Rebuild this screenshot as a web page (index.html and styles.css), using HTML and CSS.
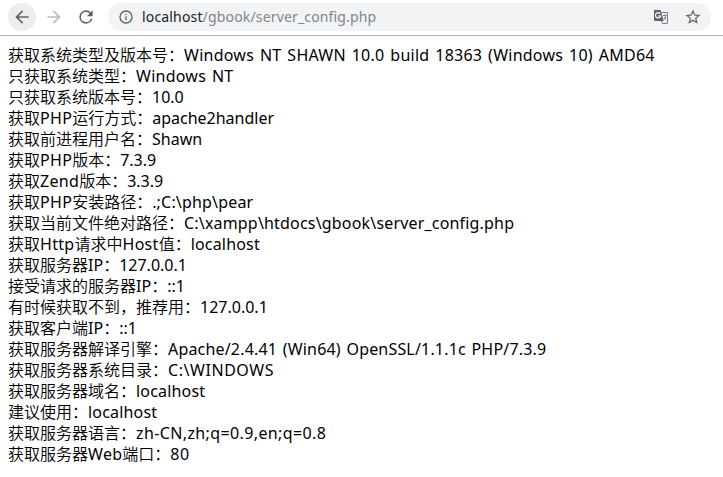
FILE: index.html
```html
<!DOCTYPE html>
<html lang="zh-CN">
<head>
<meta charset="utf-8">
<title>localhost/gbook/server_config.php</title>
<link rel="stylesheet" href="styles.css">
</head>
<body>
<header class="toolbar">
  <button class="nav back" aria-label="Back"><svg width="20" height="20" viewBox="0 0 24 24"><path d="M20 11H7.83l5.59-5.59L12 4l-8 8 8 8 1.41-1.41L7.83 13H20z"/></svg></button>
  <button class="nav forward" aria-label="Forward"><svg width="20" height="20" viewBox="0 0 24 24"><path d="M12 4l-1.41 1.41L16.17 11H4v2h12.17l-5.58 5.59L12 20l8-8z"/></svg></button>
  <button class="nav reload" aria-label="Reload"><svg width="20" height="20" viewBox="0 0 24 24"><path d="M17.65 6.35A7.96 7.96 0 0 0 12 4a8 8 0 1 0 7.73 10h-2.08A6 6 0 1 1 12 6c1.66 0 3.14.69 4.22 1.78L13 11h7V4z"/></svg></button>
  <div class="address">
    <svg class="info" width="16" height="16" viewBox="0 0 24 24"><path d="M11 7h2v2h-2zm0 4h2v6h-2zm1-9a10 10 0 1 0 0 20 10 10 0 0 0 0-20zm0 18a8 8 0 1 1 0-16 8 8 0 0 1 0 16z"/></svg>
    <span class="url"><span class="host">localhost</span>/gbook/server_config.php</span>
    <svg class="translate" width="16" height="16" viewBox="0 0 16 16"><path class="sheet" d="M8 3.5h6.5v11H9.5L8.5 12"/><path d="M1 1h6.5l3.2 11H2a1 1 0 0 1-1-1z"/><path class="mark" d="M7.2 4.8A2.6 2.6 0 1 0 7.6 7H5.2"/><path class="sheet" d="M10 6.5h3.5M11.8 5.5v1M13 6.5c-.4 2-1.3 3.2-2.2 4M11 8c.6 1.2 1.3 2 2.2 2.6"/></svg>
    <svg class="star" width="18" height="18" viewBox="0 0 24 24"><path d="M22 9.24l-7.19-.62L12 2 9.19 8.63 2 9.24l5.46 4.73L5.82 21 12 17.27 18.18 21l-1.63-7.03zM12 15.4l-3.76 2.27 1-4.28-3.32-2.88 4.38-.38L12 6.1l1.71 4.04 4.38.38-3.32 2.88 1 4.28z"/></svg>
  </div>
</header>
<main class="output">
  <p>获取系统类型及版本号：<span class="value wide">Windows NT SHAWN 10.0 build 18363 (Windows 10) AMD64</span></p>
  <p>只获取系统类型：<span class="value wide">Windows NT</span></p>
  <p>只获取系统版本号：<span>10.0</span></p>
  <p>获取<span class="term">PHP</span>运行方式：<span>apache2handler</span></p>
  <p>获取前进程用户名：<span>Shawn</span></p>
  <p>获取<span class="term">PHP</span>版本：<span>7.3.9</span></p>
  <p>获取<span class="term">Zend</span>版本：<span>3.3.9</span></p>
  <p>获取<span class="term">PHP</span>安装路径：<span class="value">.;C:\php\pear</span></p>
  <p>获取当前文件绝对路径：<span class="value">C:\xampp\htdocs\gbook\server_config.php</span></p>
  <p>获取<span class="term">Http</span>请求中<span class="term">Host</span>值：<span class="value">localhost</span></p>
  <p>获取服务器<span>IP</span>：<span>127.0.0.1</span></p>
  <p>接受请求的服务器<span>IP</span>：<span>::1</span></p>
  <p>有时候获取不到，推荐用：<span>127.0.0.1</span></p>
  <p>获取客户端<span>IP</span>：<span>::1</span></p>
  <p>获取服务器解译引擎：<span class="value">Apache/2.4.41 (Win64) OpenSSL/1.1.1c PHP/7.3.9</span></p>
  <p>获取服务器系统目录：<span class="caps">C:\WINDOWS</span></p>
  <p>获取服务器域名：<span class="value">localhost</span></p>
  <p>建议使用：<span class="value">localhost</span></p>
  <p>获取服务器语言：<span class="locale">zh-CN,zh;q=0.9,en;q=0.8</span></p>
  <p>获取服务器<span class="term">Web</span>端口：<span class="caps">80</span></p>
</main>
</body>
</html>
```
FILE: styles.css
```css
* { box-sizing: border-box; }
body {
  margin: 0;
  background: #fff;
  color: #000;
  font-family: "Noto Sans", "Noto Sans CJK SC", sans-serif;
  overflow: hidden;
}
.toolbar {
  display: flex;
  align-items: center;
  height: 36px;
  padding: 0 12px 2px 8px;
  gap: 4px;
  border-bottom: 1px solid #b3b4b6;
}
.nav {
  display: grid;
  place-items: center;
  width: 28px;
  height: 28px;
  padding: 0;
  border: 0;
  border-radius: 50%;
  background: none;
}
svg { display: block; fill: #5f6368; flex: none; }
.back { background: #ededee; }
.forward svg { fill: #babcbe; }
.address {
  display: flex;
  align-items: center;
  flex: 1;
  height: 28px;
  margin-left: 4px;
  padding: 0 9px 0 10px;
  border-radius: 14px;
  background: #f1f3f4;
}
.url {
  flex: 1;
  margin-left: 8px;
  font-size: 14px;
  letter-spacing: 0.16px;
  line-height: 20px;
  color: #80868b;
  white-space: nowrap;
}
.host { color: #202124; }
.translate { margin-right: 15px; }
.translate .sheet { fill: none; stroke: #7c8084; stroke-width: 1; }
.translate .mark { fill: none; stroke: #fff; stroke-width: 1.2; }
.output {
  padding: 9px 8px;
  font-size: 16px;
  font-weight: 350;
  line-height: 21px;
}
.output p { margin: 0; height: 21px; white-space: nowrap; }
.output span { font-weight: 400; }
.value { letter-spacing: 0.18px; word-spacing: 1.3px; }
.wide { letter-spacing: 0.24px; word-spacing: 1.5px; }
.term { letter-spacing: 0.3px; }
.locale { letter-spacing: 0.38px; }
.caps { letter-spacing: 0.55px; }
```
